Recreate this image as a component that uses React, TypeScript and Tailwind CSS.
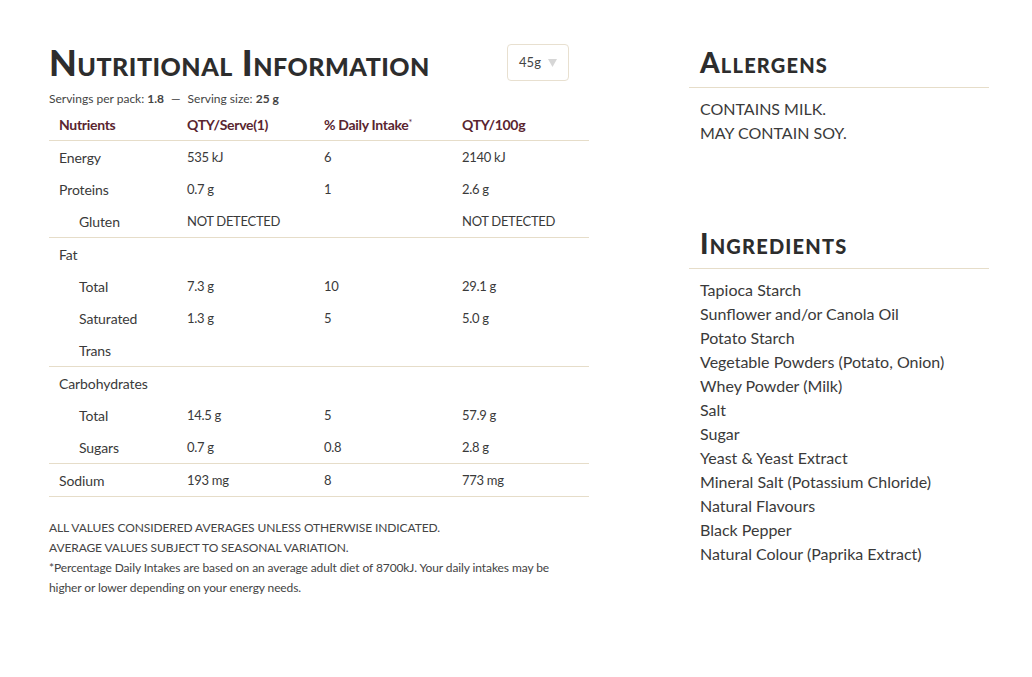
type Row = { name: string; serve?: string; di?: string; per100?: string; indent?: boolean };

const groups: Row[][] = [
    [
        { name: 'Energy', serve: '535 kJ', di: '6', per100: '2140 kJ' },
        { name: 'Proteins', serve: '0.7 g', di: '1', per100: '2.6 g' },
        { name: 'Gluten', serve: 'NOT DETECTED', per100: 'NOT DETECTED', indent: true },
    ],
    [
        { name: 'Fat' },
        { name: 'Total', serve: '7.3 g', di: '10', per100: '29.1 g', indent: true },
        { name: 'Saturated', serve: '1.3 g', di: '5', per100: '5.0 g', indent: true },
        { name: 'Trans', indent: true },
    ],
    [
        { name: 'Carbohydrates' },
        { name: 'Total', serve: '14.5 g', di: '5', per100: '57.9 g', indent: true },
        { name: 'Sugars', serve: '0.7 g', di: '0.8', per100: '2.8 g', indent: true },
    ],
    [{ name: 'Sodium', serve: '193 mg', di: '8', per100: '773 mg' }],
];

const ingredients = [
    'Tapioca Starch',
    'Sunflower and/or Canola Oil',
    'Potato Starch',
    'Vegetable Powders (Potato, Onion)',
    'Whey Powder (Milk)',
    'Salt',
    'Sugar',
    'Yeast & Yeast Extract',
    'Mineral Salt (Potassium Chloride)',
    'Natural Flavours',
    'Black Pepper',
    'Natural Colour (Paprika Extract)',
];

const cols = 'grid grid-cols-[128px_137px_138px_137px]';

function SideHeading({ children }: { children: string }) {
    return (
        <div className="pl-[11px] pt-[4px] pb-[11px] border-b border-[#e6ddc9]">
            <h2 className="font-['Lato',sans-serif] font-black text-[28px] leading-[28px] text-[#2d2d2d] [font-variant:small-caps] tracking-[1.2px]">
                {children}
            </h2>
        </div>
    );
}

export default function App() {
    return (
        <div className="w-[1032px] h-[677px] bg-white font-['Lato',sans-serif] text-[#3a3a3a]">
            <div className="flex pt-[44px] pl-[49px] gap-[100px]">
                {/* 영양 정보 */}
                <div className="w-[540px]">
                    <div className="flex items-start justify-between pr-[20px]">
                        <h1 className="font-['Lato',sans-serif] font-black text-[36px] leading-[36px] text-[#2d2d2d] [font-variant:small-caps] tracking-[0.5px]">
                            Nutritional Information
                        </h1>
                        <div className="w-[62px] h-[37px] border border-[#e8e0d0] rounded-[4px] flex items-center justify-center gap-[7px] text-[13px] text-[#444]">
                            45g
                            <svg width="9" height="8" viewBox="0 0 9 8"><path d="M0 0h9L4.5 8z" fill="#d6d6d6" /></svg>
                        </div>
                    </div>
                    <div className="text-[12px] mt-[9px] text-[#444]">
                        Servings per pack: <b className="font-bold">1.8</b>
                        <span className="mx-[7px]">—</span>
                        Serving size: <b className="font-bold">25 g</b>
                    </div>
                    <div className={`${cols} mt-[1px] h-[32px] items-center text-[14px] font-bold text-[#5a2530] border-b border-[#e6ddc9] tracking-[-0.3px]`}>
                        <div className="pl-[10px]">Nutrients</div>
                        <div className="pl-[10px]">QTY/Serve(1)</div>
                        <div className="pl-[10px]">% Daily Intake<sup className="text-[9px] font-normal">*</sup></div>
                        <div className="pl-[10px]">QTY/100g</div>
                    </div>
                    {groups.map((g, i) => (
                        <div key={i} className="border-b border-[#e6ddc9]">
                            {g.map((r, j) => (
                                <div key={j} className={`${cols} h-[32px] items-center text-[14px] tracking-[-0.1px]`}>
                                    <div className={r.indent ? 'pl-[30px]' : 'pl-[10px]'}>{r.name}</div>
                                    <div className="pl-[10px] text-[13px] translate-y-[1px] tracking-[-0.3px]">{r.serve}</div>
                                    <div className="pl-[10px] text-[13px] translate-y-[1px] tracking-[-0.3px]">{r.di}</div>
                                    <div className="pl-[10px] text-[13px] translate-y-[1px] tracking-[-0.3px]">{r.per100}</div>
                                </div>
                            ))}
                        </div>
                    ))}
                    <div className="mt-[21px] w-[530px] text-[12px] leading-[20px] text-[#444] tracking-[-0.1px]">
                        <p>ALL VALUES CONSIDERED AVERAGES UNLESS OTHERWISE INDICATED.</p>
                        <p>AVERAGE VALUES SUBJECT TO SEASONAL VARIATION.</p>
                        <p>
                            *Percentage Daily Intakes are based on an average adult diet of 8700kJ. Your daily intakes may be
                            higher or lower depending on your energy needs.
                        </p>
                    </div>
                </div>

                {/* 알레르기 / 원재료 */}
                <div className="w-[300px]">
                    <SideHeading>Allergens</SideHeading>
                    <div className="pl-[11px] pt-[9px] text-[16px] leading-[24px] h-[137px]">
                        <p>CONTAINS MILK.</p>
                        <p>MAY CONTAIN SOY.</p>
                    </div>
                    <SideHeading>Ingredients</SideHeading>
                    <ul className="pl-[11px] pt-[9px] text-[16px] leading-[24px]">
                        {ingredients.map(x => (
                            <li key={x}>{x}</li>
                        ))}
                    </ul>
                </div>
            </div>
        </div>
    );
}
